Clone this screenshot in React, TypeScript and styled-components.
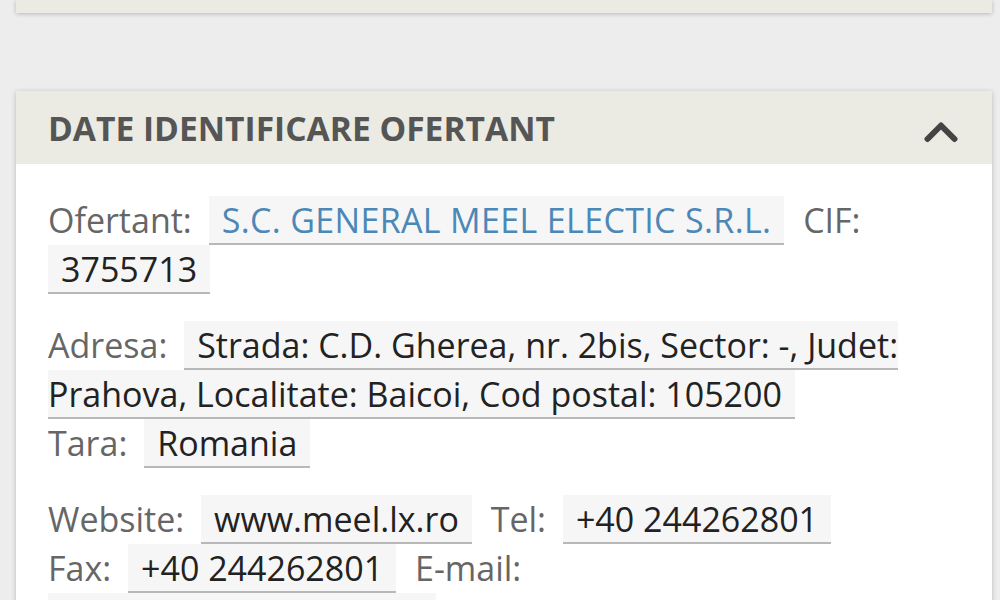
import React from 'react';
import styled, { createGlobalStyle } from 'styled-components';

const GlobalStyle = createGlobalStyle`
  html, body {
    margin: 0;
    padding: 0;
    background: #ededed;
    font-family: "Open Sans", "Noto Sans", sans-serif;
  }
`;

const Page = styled.div`
  padding: 0 8px 0 16px;
  height: 600px;
  overflow: hidden;
`;

// bottom edge of the panel above, scrolled mostly out of view
const PrevPanel = styled.div`
  height: 13px;
  background: #ebeae3;
  box-shadow: 0 1px 4px rgba(0, 0, 0, 0.22);
  margin-bottom: 78px;
`;

const Panel = styled.section`
  background: #fff;
  box-shadow: 0 1px 5px rgba(0, 0, 0, 0.22);
`;

const PanelHeader = styled.header`
  display: flex;
  justify-content: space-between;
  align-items: center;
  height: 73px;
  padding: 0 32px;
  background: #ebeae3;
`;

const PanelTitle = styled.h2`
  margin: 0;
  font-size: 33.6px;
  font-weight: 700;
  color: #555;
`;

const Chevron = styled.svg`
  width: 34px;
  height: 22px;
  margin: 8px 2px 0 0;
`;

const PanelBody = styled.div`
  padding: 32px 86px 0 32px;
  font-size: 34px;
  line-height: 49px;
`;

const Group = styled.p`
  margin: 0 0 27px;
`;

const Label = styled.span`
  color: #666;
`;

const Value = styled.span<{ $link?: boolean }>`
  color: ${(p) => (p.$link ? '#4b87b7' : '#222')};
  letter-spacing: ${(p) => (p.$link ? '0.35px' : '0')};
  background: #f6f6f6;
  border-bottom: 2px solid #b8b8b8;
  padding: 1px 13px 0;
  margin: 0 10px 0 8px;
`;

const Field = ({ label, value, link }: { label: string; value: string; link?: boolean }) => (
  <>
    <Label>{label}</Label> <Value $link={link}>{value}</Value>{' '}
  </>
);

const LineValue = styled(Value)`
  margin-left: 0;
`;

export default function App() {
  return (
    <Page>
      <GlobalStyle />
      <PrevPanel />
      <Panel>
        <PanelHeader>
          <PanelTitle>DATE IDENTIFICARE OFERTANT</PanelTitle>
          <Chevron viewBox="0 0 34 22">
            <polyline
              points="3.5,18 17,4.5 30.5,18"
              fill="none"
              stroke="#444"
              strokeWidth="6"
              strokeLinecap="round"
              strokeLinejoin="round"
            />
          </Chevron>
        </PanelHeader>
        <PanelBody>
          <Group>
            <Field label="Ofertant:" value="S.C. GENERAL MEEL ELECTIC S.R.L." link />
            <Label>CIF:</Label> <LineValue>3755713</LineValue>
          </Group>
          <Group>
            <Field label="Adresa:" value="Strada: C.D. Gherea, nr. 2bis, Sector: -, Judet: Prahova, Localitate: Baicoi, Cod postal: 105200" />
            <br />
            <Field label="Tara:" value="Romania" />
          </Group>
          <Group>
            <Field label="Website:" value="www.meel.lx.ro" />
            <Field label="Tel:" value="+40 244262801" />
            <Field label="Fax:" value="+40 244262801" />
            <Label>E-mail:</Label> <LineValue>office.meel@meel.lx.ro</LineValue>
          </Group>
        </PanelBody>
      </Panel>
    </Page>
  );
}
